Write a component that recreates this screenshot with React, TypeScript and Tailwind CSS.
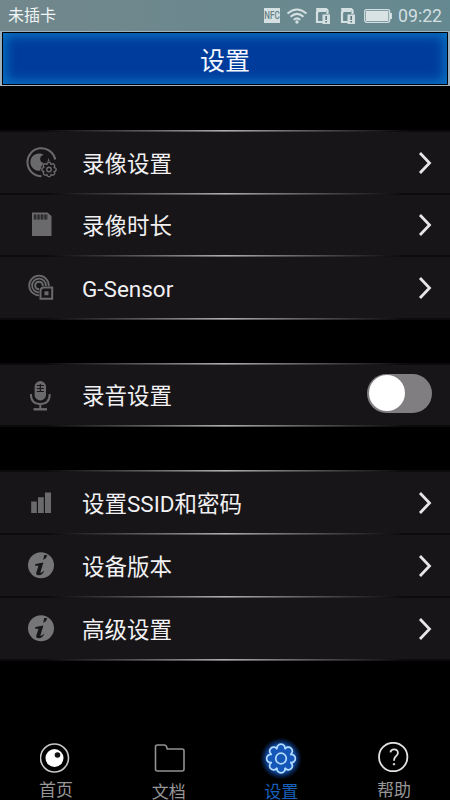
import { useState } from 'react';
import type { ReactNode } from 'react';

const petal = 'M9.24 -3.83A4 4 0 1 1 9.24 3.83A4 4 0 1 1 3.83 9.24A4 4 0 1 1 -3.83 9.24A4 4 0 1 1 -9.24 3.83A4 4 0 1 1 -9.24 -3.83A4 4 0 1 1 -3.83 -9.24A4 4 0 1 1 3.83 -9.24A4 4 0 1 1 9.24 -3.83Z';

function RecordIcon() {
  return (
    <svg width="32" height="32" viewBox="0 0 32 32" fill="none">
      <path d="M29.2 12.5A14 14 0 1 0 15.5 29.2" stroke="#6a696b" strokeWidth="2" />
      <path d="M18 8A8.7 8.7 0 1 0 14 23.8L16 18.5L20 15L23.5 14Q23 12 22 11A4 4 0 1 1 18 8Z" fill="#6a696b" />
      <circle cx="23" cy="22.5" r="8" fill="#171518" />
      <g transform="translate(23 22.5) scale(.5)" stroke="#6a696b" strokeWidth="2.8">
        <path d={petal} />
        <circle r="4.5" />
      </g>
    </svg>
  );
}

function CardIcon() {
  return (
    <svg width="32" height="32" viewBox="0 0 32 32">
      <path d="M6 3.5H21.5L25.5 7V27H6Z" fill="#6a696b" />
      <path d="M7.5 8H22" stroke="#403e41" strokeWidth="5" opacity=".6" />
      <path d="M9 5.5V10.5M12.5 5.5V10.5M16 5.5V10.5M19.5 5.5V10.5" stroke="#2c2a2d" strokeWidth="2" />
    </svg>
  );
}

function SensorIcon() {
  return (
    <svg width="32" height="32" viewBox="0 0 32 32" fill="none" stroke="#6a696b">
      <circle cx="13" cy="13.5" r="9.8" strokeWidth="1.8" />
      <circle cx="13" cy="13.5" r="6.9" strokeWidth="1.8" />
      <circle cx="13" cy="13.5" r="3.8" strokeWidth="2" />
      <path d="M13 29V18Q13 14 17 14H28V29Z" fill="#171518" stroke="none" />
      <path d="M14.5 26.8V19Q14.5 15.5 18 15.5H26.2V26.8Z" strokeWidth="2" />
      <rect x="18.5" y="19.3" width="4" height="4" fill="#6a696b" stroke="none" />
    </svg>
  );
}

function MicIcon() {
  return (
    <svg width="32" height="32" viewBox="0 0 32 32" fill="none" stroke="#6a696b">
      <rect x="8.6" y="2" width="11.4" height="19.5" rx="5.7" fill="#6a696b" stroke="none" />
      <path d="M10.8 6.5H13.6M15 6.5H17.8M10.8 9.5H13.6M15 9.5H17.8M10.8 12.5H13.6M15 12.5H17.8M14.3 5V13" stroke="#171518" strokeWidth="1.2" />
      <path d="M4.9 15C4.9 22 8.5 25 14.3 25S23.7 22 23.7 15M14.3 25V30" strokeWidth="2" />
      <path d="M7.5 30.3H21" strokeWidth="2.4" />
    </svg>
  );
}

function SignalIcon() {
  return (
    <svg width="32" height="32" viewBox="0 0 32 32" fill="#6a696b">
      <path d="M5.2 14.5H10.8V26H5.2ZM12 10.3H17.8V26H12ZM19 5.5H25V26H19Z" />
    </svg>
  );
}

function InfoIcon() {
  return (
    <svg width="32" height="32" viewBox="0 0 32 32">
      <circle cx="15" cy="15.2" r="13" fill="#767577" />
      <path d="M18.2 5L21.3 5.2Q20.5 8.7 17.2 10Z" fill="#171518" />
      <path d="M9.5 14L17.4 12.5L14.4 22.3Q14.5 24 18.5 20.4Q16.5 25.1 12.7 25.3Q9.4 25.1 10.4 22.3L12.5 15.7L9 15.7Z" fill="#171518" />
    </svg>
  );
}

function Line() {
  return (
    <div className="bg-[#121013]">
      <div className="h-px bg-linear-to-r from-[#0c0a0d] from-10% via-[#b0aeb0] via-50% to-[#0c0a0d] to-90%" />
      <div className="h-px bg-linear-to-r from-[#0c0a0d] from-10% via-[#706e71] via-50% to-[#0c0a0d] to-90%" />
    </div>
  );
}

interface RowProps {
  icon: ReactNode;
  label: string;
  height?: string;
  children?: ReactNode;
}

function Row({ icon, label, height = 'h-[61px]', children }: RowProps) {
  return (
    <div className={`${height} flex items-center bg-[#171518] pl-[26px] pr-[18px]`}>
      <div className="w-8">{icon}</div>
      <span className="ml-[24px] flex-1 pt-[2px] text-[22.5px] leading-8 text-[#f1f0f2]">{label}</span>
      {children ?? (
        <svg width="14" height="24" viewBox="0 0 14 24" className="shrink-0" fill="none" stroke="#e6e6e6" strokeWidth="2.8">
          <path d="M2 2L11.5 12L2 22" />
        </svg>
      )}
    </div>
  );
}

function SimIcon() {
  return (
    <svg width="16" height="18" viewBox="0 0 16 18" fill="none">
      <path d="M8 15H2V5L5 2H11.2L12.5 3.5V7" stroke="#d3dfe1" strokeWidth="2.2" />
      <path d="M1 1H11V5H4L2 7Z" fill="#d3dfe1" />
      <path d="M7.5 7.5H15V17H7.5Z" fill="#d3dfe1" />
      <path d="M11.2 9V13M11.2 14V15.5" stroke="#5c777d" strokeWidth="1.6" />
    </svg>
  );
}

function StatusBar() {
  return (
    <div className="flex h-[31px] items-center bg-linear-to-r from-[#71878c] to-[#658990] pl-2 pr-2">
      <span className="pt-px text-[16px] leading-6 text-[#f1f6f6]">未插卡</span>
      <div className="ml-auto flex items-center text-[#d3dfe1]">
        <div className="flex h-[15px] w-4 items-center justify-center bg-[#d3dfe1]">
          <span className="scale-x-70 text-[11.5px] font-medium text-[#657f85]">NFC</span>
        </div>
        <svg width="22" height="18" viewBox="0 0 22 18" className="ml-[6px]" fill="none" stroke="currentColor" strokeWidth="2">
          <path d="M1.5 6.5Q11 -1.5 20.5 6.5M4.5 9.7Q11 4 17.5 9.7M7.7 12.8Q11 10 14.3 12.8" />
          <circle cx="11" cy="15" r="1.7" fill="currentColor" stroke="none" />
        </svg>
        <div className="ml-[7px]"><SimIcon /></div>
        <div className="ml-[9px]"><SimIcon /></div>
        <svg width="28" height="16" viewBox="0 0 28 16" className="ml-[8px]">
          <rect x=".7" y="1.7" width="25" height="12.6" rx="2" fill="none" stroke="#d3dfe1" strokeWidth="1.3" />
          <rect x="2" y="3" width="22.4" height="10" fill="#d9e3e5" />
          <rect x="26" y="5" width="2" height="6" fill="#d3dfe1" />
        </svg>
        <span className="ml-[6px] w-[44px] whitespace-nowrap pt-px text-[17.7px] leading-6">09:22</span>
      </div>
    </div>
  );
}

interface TabProps {
  icon: ReactNode;
  label: string;
  className: string;
}

function Tab({ icon, label, className }: TabProps) {
  return (
    <div className={`flex w-[48px] flex-col items-center text-[17px] leading-[17px] ${className}`}>
      <div className="mb-[8px] h-8">{icon}</div>
      <span className="whitespace-nowrap">{label}</span>
    </div>
  );
}

export default function App() {
  const [audio, setAudio] = useState(false);

  return (
    <div className="flex h-[800px] w-[450px] flex-col overflow-hidden bg-black font-['Roboto','Noto_Sans_CJK_SC',sans-serif]">
      <StatusBar />
      <header className="h-[55px] border border-x-2 border-[#9cb0bd] bg-black p-px">
        <div className="flex h-full items-center justify-center bg-[#003c9b] shadow-[inset_0_0_12px_3px_#0873c4]">
          <h1 className="mt-[7px] text-[25px] leading-8 text-[#f4f8ff]">设置</h1>
        </div>
      </header>

      <main className="flex flex-col gap-[43px] pt-[44px]">
        <section>
          <Line />
          <Row icon={<RecordIcon />} label="录像设置" />
          <Line />
          <Row icon={<CardIcon />} label="录像时长" height="h-[60px]" />
          <Line />
          <Row icon={<SensorIcon />} label="G-Sensor" />
          <Line />
        </section>
        <section>
          <Line />
          <Row icon={<MicIcon />} label="录音设置" height="h-[60px]">
            <button
              type="button"
              role="switch"
              aria-checked={audio}
              onClick={() => setAudio(!audio)}
              className={`mb-1 flex h-[39px] w-[65px] items-center rounded-full bg-[#807e81] px-[2px] ${audio ? 'justify-end' : ''}`}
            >
              <span className="size-[36px] rounded-full bg-white" />
            </button>
          </Row>
          <Line />
        </section>
        <section>
          <Line />
          <Row icon={<SignalIcon />} label="设置SSID和密码" />
          <Line />
          <Row icon={<InfoIcon />} label="设备版本" />
          <Line />
          <Row icon={<InfoIcon />} label="高级设置" />
          <Line />
        </section>
      </main>

      <nav className="mt-auto flex h-[58px] shrink-0 items-start justify-between pl-[32px] pr-[32px]">
        <Tab
          label="首页"
          className="text-[#969696]"
          icon={
            <svg width="32" height="32" viewBox="0 0 32 32">
              <circle cx="14.5" cy="16" r="14" fill="none" stroke="#c9c9c9" strokeWidth="1.6" />
              <circle cx="14.5" cy="16" r="9" fill="#fff" />
              <circle cx="17.5" cy="13" r="2.8" fill="#111" />
            </svg>
          }
        />
        <Tab
          label="文档"
          className="pt-[2px] text-[#969696]"
          icon={
            <svg width="32" height="32" viewBox="0 0 32 32" className="translate-x-px" fill="none" stroke="#929292" strokeWidth="1.6">
              <path d="M3.5 1H10Q12 1 12.5 2.5L13.2 5H28Q30 5 30 7V25Q30 27 28 27H3.5Q1.5 27 1.5 25V3Q1.5 1 3.5 1Z" />
            </svg>
          }
        />
        <Tab
          label="设置"
          className="pt-[2px] text-[#1760b8]"
          icon={
            <svg width="32" height="32" viewBox="-16 -14.5 32 32" className="overflow-visible" fill="none">
              <defs>
                <radialGradient id="glow">
                  <stop offset="0" stopColor="#1557b8" />
                  <stop offset=".62" stopColor="#1557b8" />
                  <stop offset="1" stopColor="#0b3b8d" stopOpacity="0" />
                </radialGradient>
              </defs>
              <circle r="21" fill="url(#glow)" />
              <path d={petal} stroke="#b4dcff" strokeWidth="1.7" />
              <circle r="5.3" stroke="#b4dcff" strokeWidth="1.7" />
            </svg>
          }
        />
        <Tab
          label="帮助"
          className="text-[#969696]"
          icon={
            <svg width="32" height="32" viewBox="0 0 32 32" fill="none" stroke="#e2e2e2" strokeWidth="1.8">
              <circle cx="15.2" cy="15" r="14.2" />
              <path d="M12.4 10.4Q13 7.4 16 7.4Q20 7.4 19.9 11Q19.8 13 17.5 14.7Q16 16 16 18.8" />
              <circle cx="16" cy="22.2" r=".8" fill="#e2e2e2" strokeWidth="1" />
            </svg>
          }
        />
      </nav>
    </div>
  );
}
